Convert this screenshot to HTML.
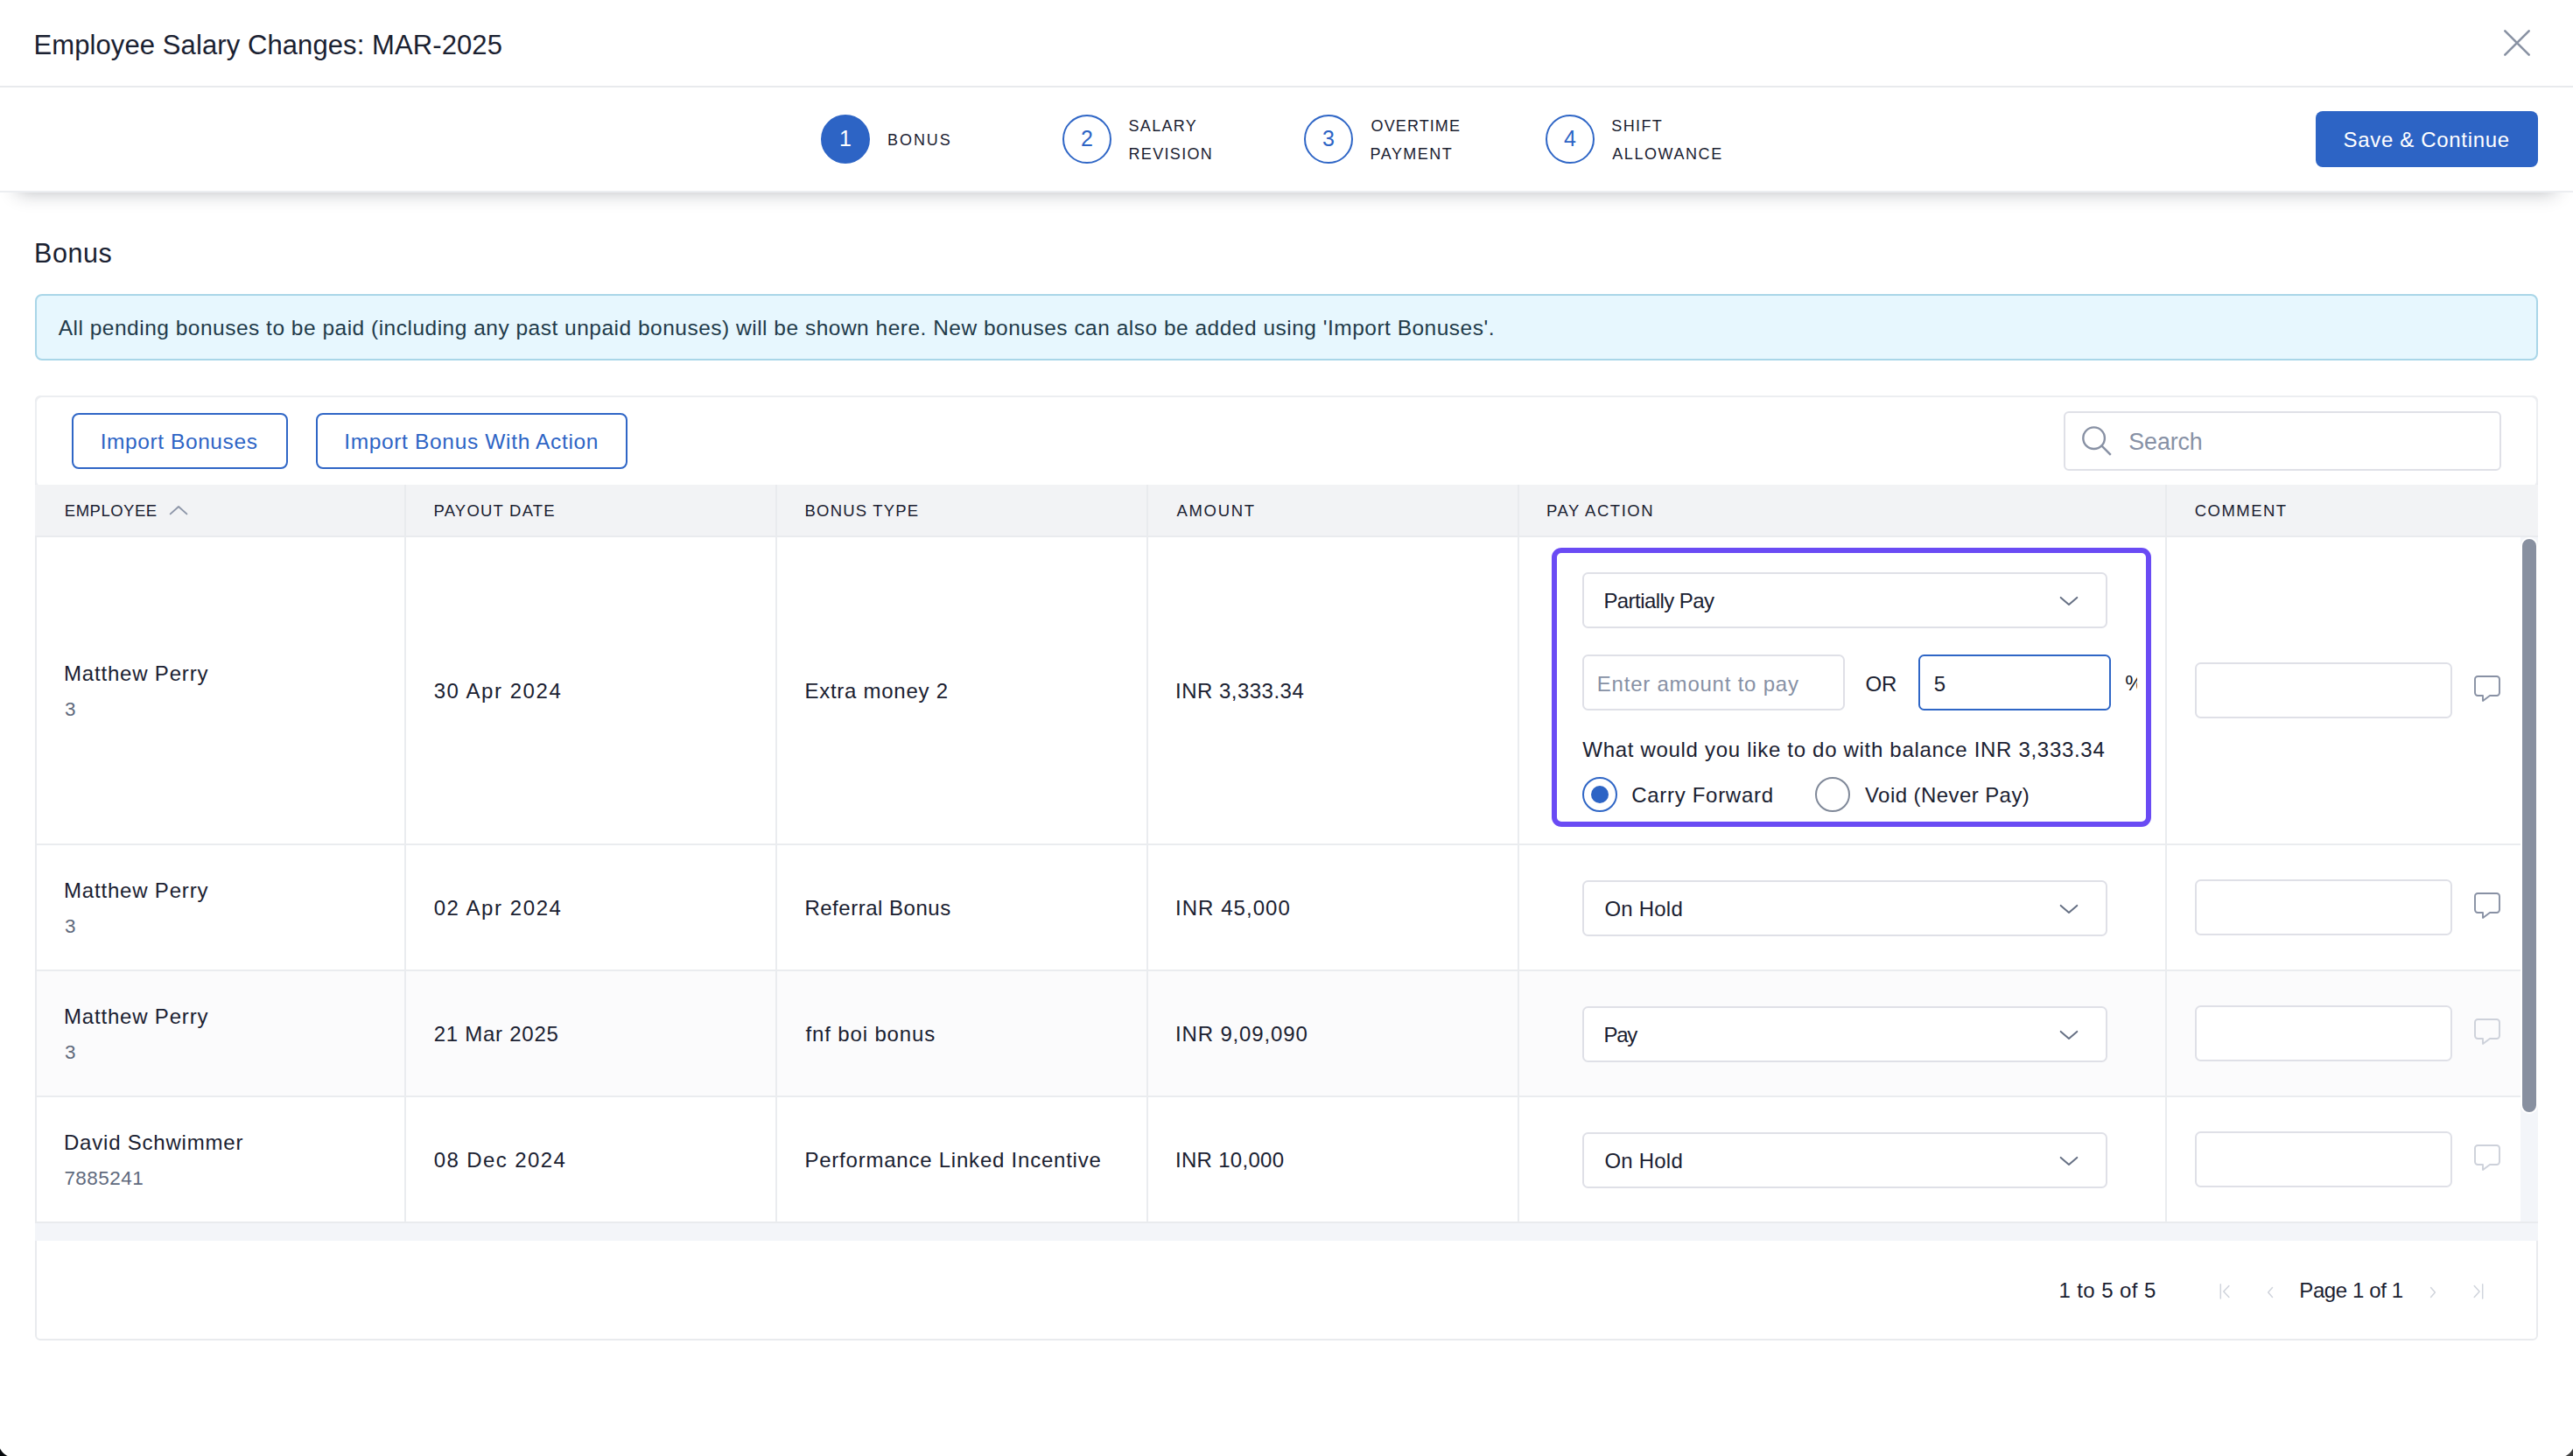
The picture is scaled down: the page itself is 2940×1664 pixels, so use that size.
<!DOCTYPE html>
<html lang="en">
<head>
<meta charset="utf-8">
<title>Employee Salary Changes: MAR-2025</title>
<style>
html,body{margin:0;padding:0}
body{position:relative;width:2940px;height:1664px;overflow:hidden;background:#fff;font-family:"Liberation Sans",Arial,sans-serif;color:#131a2a}
header,nav,main,section,footer,ol,ul,li,h1,h2,p{display:block;margin:0;padding:0;font-weight:normal;list-style:none}
.a{position:absolute;box-sizing:border-box}
.t{position:absolute;white-space:nowrap;line-height:1;margin:0;font-weight:normal}
svg{position:absolute;overflow:visible}
.ico{fill:none;stroke-linecap:round;stroke-linejoin:round}
/* title bar */
.titlebar-line{left:0;top:98px;width:2940px;height:2px;background:#e8eaed}
/* stepper */
.stepbar{left:0;top:100px;width:2940px;height:120px;background:#fff;border-bottom:2px solid #eceef1;box-shadow:0 20px 20px -20px rgba(30,35,50,.31);z-index:3}
.step-dot{width:56px;height:56px;top:131px;border-radius:50%;border:2px solid #2f66c6;background:#fff;z-index:4}
.step-dot.on{background:#2d64c5;border-color:#2d64c5}
.step-num{z-index:5;width:56px;text-align:center;top:146.4px;font-size:25px;color:#2d64c5}
.step-num.on{color:#fff}
.z5{z-index:5}
.btn-primary{left:2646px;top:127px;width:254px;height:64px;border-radius:8px;background:#2d64c5;z-index:4}
/* banner */
.banner{left:40px;top:336px;width:2860px;height:76px;border:2px solid #a9d6e8;border-radius:8px;background:#e7f7fe}
/* card */
.card{left:40px;top:452px;width:2860px;height:1080px;border:2px solid #e9ebee;border-radius:6px;background:#fff}
.toolbar{left:40px;top:452px;width:2860px;height:106px;border:2px solid #eceef1;border-radius:8px;background:#fff}
.btn-outline{top:472px;height:64px;border:2px solid #2f66c6;border-radius:8px;background:#fff}
.field{border:2px solid #dfe0e7;border-radius:6.5px;background:#fff}
.field.focus{border:2px solid #2f66c6}
/* grid */
.thead{left:40px;top:554px;width:2860px;height:60px;background:#f2f3f5;border-bottom:2px solid #e9ebee}
.vsep{width:2px;background:#eaecef}
.vsep.h{top:554px;height:58px;background:#e9ebee}
.vsep.b{top:614px;height:782px}
.row{left:42px;width:2838px;background:#fff;border-bottom:2px solid #eaecef}
.row.alt{background:#fbfbfc}
.vtrack{left:2880px;top:614px;width:20px;height:784px;background:#f3f5f9}
.vthumb{left:2880px;top:614px;width:20px;height:659px;border:2px solid #fff;border-radius:10px;background:#8890a0}
.hband{left:40px;top:1396px;width:2860px;height:22px;background:#f3f5f9;border-top:2px solid #e9ebee}
.highlight{left:1773px;top:626px;width:685px;height:319px;border:6px solid #6a4bf4;border-radius:11px}
.radio{width:40px;height:40px;top:888px;border-radius:50%;background:#fff}
/* fallback when rendered in a 1470px CSS viewport at 2x density */
@media (max-width:1600px){html{zoom:.5}}
</style>
</head>
<body>
<header>
<h1 class="t" style="left:38.5px;top:35.56px;font-size:31px;letter-spacing:0.094px;color:#1a2131;">Employee Salary Changes: MAR-2025</h1>
<svg role="img" aria-label="Close" class="ico" style="left:2861px;top:34px" width="30" height="30" viewBox="0 0 30 30" stroke="#8992a3" stroke-width="2.6"><path d="M1.3 1.3 L28.7 28.7 M28.7 1.3 L1.3 28.7"/></svg>
<div class="a titlebar-line"></div>
</header>
<nav>
<div class="a stepbar"></div>
<ol>
<li><div class="a step-dot on" style="left:938px"></div><span class="t step-num on" style="left:938px">1</span><span class="t z5" style="left:1014.0px;top:150.56px;font-size:18px;letter-spacing:1.94px;color:#1a2131;">BONUS</span></li>
<li><div class="a step-dot" style="left:1214px"></div><span class="t step-num" style="left:1214px">2</span><span class="t z5" style="left:1289.5px;top:134.76px;font-size:18px;letter-spacing:1.32px;color:#1a2131;">SALARY</span><span class="t z5" style="left:1289.5px;top:166.76px;font-size:18px;letter-spacing:1.326px;color:#1a2131;">REVISION</span></li>
<li><div class="a step-dot" style="left:1490px"></div><span class="t step-num" style="left:1490px">3</span><span class="t z5" style="left:1566.6px;top:134.76px;font-size:18px;letter-spacing:1.097px;color:#1a2131;">OVERTIME</span><span class="t z5" style="left:1565.6px;top:166.76px;font-size:18px;letter-spacing:1.473px;color:#1a2131;">PAYMENT</span></li>
<li><div class="a step-dot" style="left:1766px"></div><span class="t step-num" style="left:1766px">4</span><span class="t z5" style="left:1841.3px;top:134.76px;font-size:18px;letter-spacing:1.39px;color:#1a2131;">SHIFT</span><span class="t z5" style="left:1842.3px;top:166.76px;font-size:18px;letter-spacing:1.565px;color:#1a2131;">ALLOWANCE</span></li>
</ol>
<div role="button"><div class="a btn-primary"></div><span class="t z5" style="left:2677.6px;top:147.68px;font-size:24px;letter-spacing:0.666px;color:#ffffff;">Save &amp; Continue</span></div>
</nav>
<main>
<h2 class="t" style="left:39.0px;top:274.18px;font-size:30.5px;letter-spacing:0.55px;color:#1a2131;">Bonus</h2>
<div class="a banner"></div><p class="t" style="left:66.7px;top:362.76px;font-size:24.5px;letter-spacing:0.498px;color:#1f3b4a;">All pending bonuses to be paid (including any past unpaid bonuses) will be shown here. New bonuses can also be added using 'Import Bonuses'.</p>
<section>
<div class="a card"></div>
<div class="a toolbar"></div>
<div role="button"><div class="a btn-outline" style="left:82px;width:247px"></div><span class="t" style="left:114.7px;top:492.56px;font-size:24.5px;letter-spacing:0.585px;color:#2d64c5;">Import Bonuses</span></div>
<div role="button"><div class="a btn-outline" style="left:361px;width:356px"></div><span class="t" style="left:393.2px;top:492.56px;font-size:24.5px;letter-spacing:0.661px;color:#2d64c5;">Import Bonus With Action</span></div>
<div role="searchbox"><div class="a field" style="left:2358px;top:470px;width:500px;height:68px;border-radius:6px"></div>
<svg class="ico" style="left:2376px;top:484px" width="40" height="40" viewBox="2376 484 40 40" stroke="#8891a4" stroke-width="2.4"><circle cx="2392.6" cy="500.7" r="12.3"/><path d="M2401.6 509.7 L2411.8 519.9" stroke-linecap="butt"/></svg>
<span class="t" style="left:2432.3px;top:491.51px;font-size:26.8px;letter-spacing:-0.096px;color:#8791a5;">Search</span></div>
<div role="grid" aria-label="Bonus">
<div role="row">
<div class="a thead"></div>
<div class="a vsep h" style="left:462px"></div>
<div class="a vsep h" style="left:886px"></div>
<div class="a vsep h" style="left:1310px"></div>
<div class="a vsep h" style="left:1734px"></div>
<div class="a vsep h" style="left:2474px"></div>
<div role="columnheader"><span class="t" style="left:73.8px;top:574.64px;font-size:18.5px;letter-spacing:0.51px;color:#1a2131;">EMPLOYEE</span></div>
<div role="columnheader"><span class="t" style="left:495.5px;top:574.64px;font-size:18.5px;letter-spacing:1.21px;color:#1a2131;">PAYOUT DATE</span></div>
<div role="columnheader"><span class="t" style="left:919.6px;top:574.64px;font-size:18.5px;letter-spacing:1.177px;color:#1a2131;">BONUS TYPE</span></div>
<div role="columnheader"><span class="t" style="left:1344.5px;top:574.64px;font-size:18.5px;letter-spacing:1.67px;color:#1a2131;">AMOUNT</span></div>
<div role="columnheader"><span class="t" style="left:1767.0px;top:574.64px;font-size:18.5px;letter-spacing:1.51px;color:#1a2131;">PAY ACTION</span></div>
<div role="columnheader"><span class="t" style="left:2507.7px;top:574.64px;font-size:18.5px;letter-spacing:1.477px;color:#1a2131;">COMMENT</span></div>
<svg class="ico" style="left:190px;top:574px" width="28" height="18" viewBox="190 574 28 18" stroke="#8d96a8" stroke-width="1.9" stroke-linecap="butt" stroke-linejoin="miter"><path d="M194.7 587.4 L204.05 579 L213.4 587.4"/></svg>
</div>
<div role="rowgroup">
<div class="a row" style="top:614px;height:352px"></div>
<div class="a row" style="top:966px;height:144px"></div>
<div class="a row alt" style="top:1110px;height:144px"></div>
<div class="a row" style="top:1254px;height:144px"></div>
<div class="a vsep b" style="left:462px"></div>
<div class="a vsep b" style="left:886px"></div>
<div class="a vsep b" style="left:1310px"></div>
<div class="a vsep b" style="left:1734px"></div>
<div class="a vsep b" style="left:2474px"></div>
<div class="a vtrack"></div><div class="a vthumb"></div>
<div role="row">
<div role="gridcell"><span class="t" style="left:73.0px;top:757.98px;font-size:24px;letter-spacing:0.81px;color:#1a2131;">Matthew Perry</span><span class="t" style="left:74.0px;top:800.15px;font-size:22.5px;color:#5f6a7d;">3</span></div><div role="gridcell"><span class="t" style="left:495.7px;top:777.68px;font-size:24px;letter-spacing:1.56px;color:#1a2131;">30 Apr 2024</span></div><div role="gridcell"><span class="t" style="left:919.4px;top:777.68px;font-size:24px;letter-spacing:0.743px;color:#1a2131;">Extra money 2</span></div><div role="gridcell"><span class="t" style="left:1343.0px;top:777.68px;font-size:24px;letter-spacing:0.487px;color:#1a2131;">INR 3,333.34</span></div>
<div role="gridcell">
<div class="a highlight"></div>
<div role="combobox"><div class="a field" style="left:1808px;top:654px;width:600px;height:64px"></div><span class="t" style="left:1832.4px;top:675.18px;font-size:24px;letter-spacing:-0.57px;color:#1a2131;">Partially Pay</span><svg class="ico" style="left:2350px;top:677.3px" width="28" height="20" viewBox="2350 677.3 28 20" stroke="#667084" stroke-width="2" stroke-linecap="butt" stroke-linejoin="miter"><path d="M2354.7 683.1999999999999 L2364 691.3 L2373.3 683.1999999999999"/></svg></div>
<div role="textbox"><div class="a field" style="left:1808px;top:748px;width:300px;height:64px"></div><span class="t" style="left:1824.8px;top:769.58px;font-size:24px;letter-spacing:0.776px;color:#8791a5;">Enter amount to pay</span></div>
<span class="t" style="left:2131.6px;top:769.58px;font-size:24px;letter-spacing:-0.2px;color:#1a2131;">OR</span>
<div role="textbox"><div class="a field focus" style="left:2192px;top:748px;width:220px;height:64px"></div><span class="t" style="left:2209.7px;top:769.58px;font-size:24px;color:#1a2131;">5</span></div>
<div class="a" style="left:2420px;top:760px;width:22.2px;height:44px;overflow:hidden"><span class="t" style="left:8.3px;top:8.58px;font-size:24px;color:#131a2a">%</span></div>
<p class="t" style="left:1808.3px;top:844.98px;font-size:24px;letter-spacing:0.696px;color:#1a2131;">What would you like to do with balance INR 3,333.34</p>
<div role="radiogroup"><div role="radio" aria-checked="true"><div class="a radio" style="left:1808px;border:2px solid #2f66c6"></div><div class="a" style="left:1818px;top:898px;width:20px;height:20px;border-radius:50%;background:#2d64c5"></div><span class="t" style="left:1864.2px;top:896.98px;font-size:24px;letter-spacing:0.703px;color:#1a2131;">Carry Forward</span></div>
<div role="radio" aria-checked="false"><div class="a radio" style="left:2074px;border:2px solid #808999"></div><span class="t" style="left:2131.0px;top:896.98px;font-size:24px;letter-spacing:0.427px;color:#1a2131;">Void (Never Pay)</span></div></div>
</div>
<div role="gridcell"><div role="textbox" class="a field" style="left:2508px;top:757px;width:294px;height:64px"></div><svg class="ico" style="left:2827px;top:772px" width="30" height="30" viewBox="0 0 30 30" stroke="#8891a4" stroke-width="1.9"><path d="M4.2 1 H25.8 A3.2 3.2 0 0 1 29 4.2 V19.8 A3.2 3.2 0 0 1 25.8 23 H18 L10 29 V23 H4.2 A3.2 3.2 0 0 1 1 19.8 V4.2 A3.2 3.2 0 0 1 4.2 1 Z"/></svg></div>
</div>
<div role="row">
<div role="gridcell"><span class="t" style="left:73.0px;top:1006.18px;font-size:24px;letter-spacing:0.81px;color:#1a2131;">Matthew Perry</span><span class="t" style="left:74.0px;top:1047.95px;font-size:22.5px;color:#5f6a7d;">3</span></div><div role="gridcell"><span class="t" style="left:495.7px;top:1025.68px;font-size:24px;letter-spacing:1.58px;color:#1a2131;">02 Apr 2024</span></div><div role="gridcell"><span class="t" style="left:919.4px;top:1025.68px;font-size:24px;letter-spacing:0.514px;color:#1a2131;">Referral Bonus</span></div><div role="gridcell"><span class="t" style="left:1343.0px;top:1025.68px;font-size:24px;letter-spacing:1.049px;color:#1a2131;">INR 45,000</span></div>
<div role="gridcell"><div role="combobox"><div class="a field" style="left:1808px;top:1006px;width:600px;height:64px"></div><span class="t" style="left:1833.5px;top:1027.18px;font-size:24px;letter-spacing:0.2px;color:#1a2131;">On Hold</span><svg class="ico" style="left:2350px;top:1029.3px" width="28" height="20" viewBox="2350 1029.3 28 20" stroke="#667084" stroke-width="2" stroke-linecap="butt" stroke-linejoin="miter"><path d="M2354.7 1035.2 L2364 1043.3 L2373.3 1035.2"/></svg></div></div>
<div role="gridcell"><div role="textbox" class="a field" style="left:2508px;top:1005px;width:294px;height:64px"></div><svg class="ico" style="left:2827px;top:1020px" width="30" height="30" viewBox="0 0 30 30" stroke="#8891a4" stroke-width="1.9"><path d="M4.2 1 H25.8 A3.2 3.2 0 0 1 29 4.2 V19.8 A3.2 3.2 0 0 1 25.8 23 H18 L10 29 V23 H4.2 A3.2 3.2 0 0 1 1 19.8 V4.2 A3.2 3.2 0 0 1 4.2 1 Z"/></svg></div>
</div>
<div role="row">
<div role="gridcell"><span class="t" style="left:73.0px;top:1150.18px;font-size:24px;letter-spacing:0.81px;color:#1a2131;">Matthew Perry</span><span class="t" style="left:74.0px;top:1191.95px;font-size:22.5px;color:#5f6a7d;">3</span></div><div role="gridcell"><span class="t" style="left:495.7px;top:1169.68px;font-size:24px;letter-spacing:0.74px;color:#1a2131;">21 Mar 2025</span></div><div role="gridcell"><span class="t" style="left:920.6px;top:1169.68px;font-size:24px;letter-spacing:0.843px;color:#1a2131;">fnf boi bonus</span></div><div role="gridcell"><span class="t" style="left:1343.0px;top:1169.68px;font-size:24px;letter-spacing:0.851px;color:#1a2131;">INR 9,09,090</span></div>
<div role="gridcell"><div role="combobox"><div class="a field" style="left:1808px;top:1150px;width:600px;height:64px"></div><span class="t" style="left:1832.5px;top:1171.18px;font-size:24px;letter-spacing:-1.3px;color:#1a2131;">Pay</span><svg class="ico" style="left:2350px;top:1173.3px" width="28" height="20" viewBox="2350 1173.3 28 20" stroke="#667084" stroke-width="2" stroke-linecap="butt" stroke-linejoin="miter"><path d="M2354.7 1179.2 L2364 1187.3 L2373.3 1179.2"/></svg></div></div>
<div role="gridcell"><div role="textbox" class="a field" style="left:2508px;top:1149px;width:294px;height:64px"></div><svg class="ico" style="left:2827px;top:1164px" width="30" height="30" viewBox="0 0 30 30" stroke="#cdd1da" stroke-width="1.9"><path d="M4.2 1 H25.8 A3.2 3.2 0 0 1 29 4.2 V19.8 A3.2 3.2 0 0 1 25.8 23 H18 L10 29 V23 H4.2 A3.2 3.2 0 0 1 1 19.8 V4.2 A3.2 3.2 0 0 1 4.2 1 Z"/></svg></div>
</div>
<div role="row">
<div role="gridcell"><span class="t" style="left:73.0px;top:1294.18px;font-size:24px;letter-spacing:0.789px;color:#1a2131;">David Schwimmer</span><span class="t" style="left:73.4px;top:1335.95px;font-size:22.5px;letter-spacing:0.467px;color:#5f6a7d;">7885241</span></div><div role="gridcell"><span class="t" style="left:495.7px;top:1313.68px;font-size:24px;letter-spacing:1.4px;color:#1a2131;">08 Dec 2024</span></div><div role="gridcell"><span class="t" style="left:919.4px;top:1313.68px;font-size:24px;letter-spacing:0.775px;color:#1a2131;">Performance Linked Incentive</span></div><div role="gridcell"><span class="t" style="left:1343.0px;top:1313.68px;font-size:24px;letter-spacing:0.293px;color:#1a2131;">INR 10,000</span></div>
<div role="gridcell"><div role="combobox"><div class="a field" style="left:1808px;top:1294px;width:600px;height:64px"></div><span class="t" style="left:1833.5px;top:1315.18px;font-size:24px;letter-spacing:0.2px;color:#1a2131;">On Hold</span><svg class="ico" style="left:2350px;top:1317.3px" width="28" height="20" viewBox="2350 1317.3 28 20" stroke="#667084" stroke-width="2" stroke-linecap="butt" stroke-linejoin="miter"><path d="M2354.7 1323.2 L2364 1331.3 L2373.3 1323.2"/></svg></div></div>
<div role="gridcell"><div role="textbox" class="a field" style="left:2508px;top:1293px;width:294px;height:64px"></div><svg class="ico" style="left:2827px;top:1308px" width="30" height="30" viewBox="0 0 30 30" stroke="#cdd1da" stroke-width="1.9"><path d="M4.2 1 H25.8 A3.2 3.2 0 0 1 29 4.2 V19.8 A3.2 3.2 0 0 1 25.8 23 H18 L10 29 V23 H4.2 A3.2 3.2 0 0 1 1 19.8 V4.2 A3.2 3.2 0 0 1 4.2 1 Z"/></svg></div>
</div>
</div>
</div>
<div class="a hband"></div>
<footer>
<span class="t" style="left:2352.4px;top:1463.18px;font-size:24px;letter-spacing:0.42px;color:#1a2131;">1 to 5 of 5</span>
<svg role="img" aria-label="First page" class="ico" style="left:2530px;top:1462px" width="24" height="28" viewBox="2530 1462 24 28" stroke="#d0d4dc" stroke-width="1.5" stroke-linecap="butt" stroke-linejoin="miter"><path d="M2537.3 1467.8 V1484 M2546.9 1469.5 L2540.8 1476 L2546.9 1482.5"/></svg>
<svg role="img" aria-label="Previous page" class="ico" style="left:2586px;top:1466px" width="16" height="22" viewBox="2586 1466 16 22" stroke="#d0d4dc" stroke-width="1.5" stroke-linecap="butt" stroke-linejoin="miter"><path d="M2596.5 1471.6 L2591.7 1477.1 L2596.5 1482.5"/></svg>
<span class="t" style="left:2627.3px;top:1463.18px;font-size:24px;letter-spacing:-0.4px;color:#1a2131;">Page 1 of 1</span>
<svg role="img" aria-label="Next page" class="ico" style="left:2772px;top:1466px" width="16" height="22" viewBox="2772 1466 16 22" stroke="#d0d4dc" stroke-width="1.5" stroke-linecap="butt" stroke-linejoin="miter"><path d="M2777.6 1471.6 L2782.4 1477.1 L2777.6 1482.5"/></svg>
<svg role="img" aria-label="Last page" class="ico" style="left:2820px;top:1462px" width="24" height="28" viewBox="2820 1462 24 28" stroke="#d0d4dc" stroke-width="1.5" stroke-linecap="butt" stroke-linejoin="miter"><path d="M2827.2 1469.5 L2833.1 1475.9 L2827.2 1482.4 M2836.7 1467.8 V1484"/></svg>
</footer>
</section>
</main>
<div class="a" style="left:0;top:1652px;width:12px;height:12px;background:radial-gradient(circle at 17.7px -5.7px,transparent 19.4px,#05080b 20.4px)"></div>
<div class="a" style="left:2928px;top:1652px;width:12px;height:12px;background:radial-gradient(circle at -5.7px -5.7px,transparent 19.4px,#3b3b3b 20.4px)"></div>
</body>
</html>
